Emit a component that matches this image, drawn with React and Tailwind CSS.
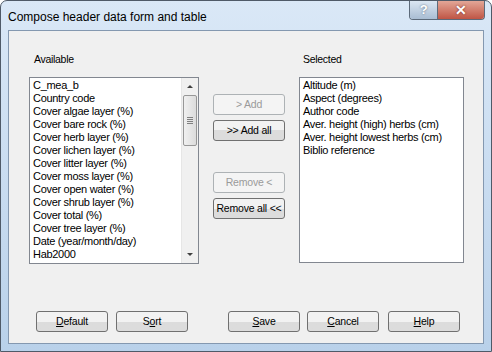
const available = [
  'C_mea_b',
  'Country code',
  'Cover algae layer (%)',
  'Cover bare rock (%)',
  'Cover herb layer (%)',
  'Cover lichen layer (%)',
  'Cover litter layer (%)',
  'Cover moss layer (%)',
  'Cover open water (%)',
  'Cover shrub layer (%)',
  'Cover total (%)',
  'Cover tree layer (%)',
  'Date (year/month/day)',
  'Hab2000',
];

const selected = [
  'Altitude (m)',
  'Aspect (degrees)',
  'Author code',
  'Aver. height (high) herbs (cm)',
  'Aver. height lowest herbs (cm)',
  'Biblio reference',
];

function Btn({ children, disabled, className = '' }) {
  return (
    <button
      className={`h-[21px] w-[72px] whitespace-nowrap rounded-[3px] border px-0 text-[10.5px] leading-none tracking-[-0.2px] ${
        disabled
          ? 'border-[#adb2b5] bg-[#f4f4f4] text-[#9a9a9a]'
          : 'border-[#707070] bg-gradient-to-b from-[#f2f2f2] from-50% to-[#dcdcdc] to-50% text-black'
      } ${className}`}
    >
      {children}
    </button>
  );
}

function Scrollbar() {
  return (
    <div className="flex w-[17px] flex-col border-l border-[#e6e6e6] bg-[#f0f0f0]">
      <div className="flex h-[17px] items-center justify-center">
        <div className="h-0 w-0 border-x-[3px] border-b-[3px] border-x-transparent border-b-[#404040]" />
      </div>
      <div className="mx-[1px] flex h-[51px] items-center justify-center rounded-[2px] border border-[#979797] bg-gradient-to-r from-[#f0f0f0] to-[#dcdcdc]">
        <div className="flex flex-col gap-[1px]">
          <div className="h-[1px] w-[6px] bg-[#808080]" />
          <div className="h-[1px] w-[6px] bg-[#808080]" />
          <div className="h-[1px] w-[6px] bg-[#808080]" />
          <div className="h-[1px] w-[6px] bg-[#808080]" />
        </div>
      </div>
      <div className="flex-1" />
      <div className="flex h-[17px] items-center justify-center">
        <div className="h-0 w-0 border-x-[3px] border-t-[3px] border-x-transparent border-t-[#404040]" />
      </div>
    </div>
  );
}

export default function App() {
  return (
    <div
      className="flex h-[352px] w-[492px] flex-col overflow-hidden rounded-t-[7px] border border-[#4f5a68] bg-gradient-to-b from-[#dae8f7] to-[#b9d1ea] text-[10.5px] tracking-[-0.3px] text-black"
      style={{ fontFamily: '"Liberation Sans", Arial, sans-serif' }}
    >
      {/* Title bar */}
      <div className="flex h-[29px] items-start">
        <div className="pl-[7px] pt-[7px] text-[12px] tracking-normal text-black">Compose header data form and table</div>
        <div className="ml-auto mr-[6px] flex h-[19px] overflow-hidden rounded-b-[4px] border border-t-0 border-[#5c6a7a]">
          <div className="flex w-[28px] items-center justify-center border-r border-[#5c6a7a] bg-gradient-to-b from-[#dbe6f2] to-[#a9bdd3] text-[13px] font-bold text-white [text-shadow:0_0_2px_#55667a]">
            ?
          </div>
          <div className="flex w-[46px] items-center justify-center bg-gradient-to-b from-[#e2a697] to-[#bf5545] text-[14px] font-bold text-white [text-shadow:0_0_2px_#6b1d12]">
            ✕
          </div>
        </div>
      </div>

      {/* Client area */}
      <div className="mx-[7px] mb-[7px] flex flex-1 flex-col border border-[#8498b0] bg-[#f0f0f0] pl-[20px] pt-[21px]">
        <div className="flex">
          {/* Available */}
          <div className="flex flex-col">
            <div className="h-[25px] pl-[5px]">Available</div>
            <div className="flex h-[187px] w-[170px] border border-[#828790] bg-white">
              <div className="flex-1 pl-[3px] pt-[1px] text-[11px] leading-[13px]">
                {available.map((a) => (
                  <div key={a} className="whitespace-nowrap">{a}</div>
                ))}
              </div>
              <Scrollbar />
            </div>
          </div>

          {/* Middle buttons */}
          <div className="ml-[14px] flex flex-col pt-[42px]">
            <Btn disabled>&gt; Add</Btn>
            <Btn className="mt-[5px]">&gt;&gt; Add all</Btn>
            <Btn disabled className="mt-[31px]">Remove &lt;</Btn>
            <Btn className="mt-[5px]">Remove all &lt;&lt;</Btn>
          </div>

          {/* Selected */}
          <div className="ml-[14px] flex flex-col">
            <div className="h-[25px] pl-[4px]">Selected</div>
            <div className="h-[186px] w-[165px] border border-[#828790] bg-white pl-[3px] pt-[1px] text-[11px] leading-[13px]">
              {selected.map((s) => (
                <div key={s} className="whitespace-nowrap">{s}</div>
              ))}
            </div>
          </div>
        </div>

        {/* Bottom buttons */}
        <div className="mb-[11px] mt-auto flex pl-[7px]">
          <Btn><u>D</u>efault</Btn>
          <Btn className="ml-[8px]">S<u>o</u>rt</Btn>
          <Btn className="ml-[40px]"><u>S</u>ave</Btn>
          <Btn className="ml-[7px]"><u>C</u>ancel</Btn>
          <Btn className="ml-[9px]"><u>H</u>elp</Btn>
        </div>
      </div>
    </div>
  );
}
